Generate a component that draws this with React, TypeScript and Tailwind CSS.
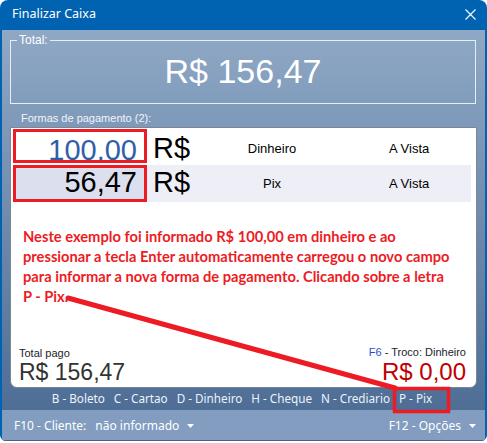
import React from "react";

// Payment rows shown in the "Formas de pagamento" list
interface PaymentRow {
    value: string;
    kind: string;
    term: string;
    active: boolean;
}

const rows: PaymentRow[] = [
    { value: "100,00", kind: "Dinheiro", term: "A Vista", active: false },
    { value: "56,47", kind: "Pix", term: "A Vista", active: true },
];

const shortcuts = ["B - Boleto", "C - Cartao", "D - Dinheiro", "H - Cheque", "N - Crediario", "P - Pix"];

const Caret = () => (
    <svg width="7" height="4" viewBox="0 0 7 4" className="inline-block ml-[8px] mb-[1px]">
        <path d="M0 0 H7 L3.5 4 Z" fill="#ffffff" />
    </svg>
);

const App = () => {
    return (
        <div className="relative w-[487px] h-[443px] bg-white overflow-hidden">
            {/* Window */}
            <div className="flex flex-col w-[487px] h-[441px] rounded-t-[8px] rounded-b-[6px] bg-[#0063b1] overflow-hidden">

                {/* TITLE BAR */}
                <div className="flex items-center justify-between h-[30px] pl-[12px] pr-[11px] font-['Noto_Sans',sans-serif] text-[12.5px] text-white shrink-0">
                    <span className="-mt-[1px]">Finalizar Caixa</span>
                    <svg width="11" height="11" viewBox="0 0 11 11" className="-mt-[2px]">
                        <path d="M0.5 0.5 L10.5 10.5 M10.5 0.5 L0.5 10.5" stroke="#ffffff" strokeWidth="1.1" />
                    </svg>
                </div>

                <div className="flex-1 mx-[2px] flex flex-col">
                    <div className="flex-1 flex flex-col bg-linear-to-b from-[#8fa8c5] to-[#4e6e96] font-['Liberation_Sans',Arial,sans-serif]">

                        {/* TOTAL */}
                        <fieldset className="mt-[3px] ml-[8px] w-[466px] h-[71px] border border-[#e6edf4] rounded-none px-0 pb-0">
                            <legend className="ml-[6px] px-[2px] text-[12px] leading-[14px] text-white">Total:</legend>
                            <div className="text-center text-white text-[34px] leading-[40px] mt-[4px]">R$ 156,47</div>
                        </fieldset>

                        <div className="mt-[8px] ml-[19px] text-[11px] leading-[13px] text-[#f2f5fa]">Formas de pagamento (2):</div>

                        {/* PAYMENTS PANEL */}
                        <div className="mt-[2px] ml-[8px] w-[467px] h-[261px] bg-white border border-[#7d8794] rounded-b-[7px] flex flex-col">
                            <div className="flex flex-col gap-[2px] pt-[1px] pl-[2px] pr-[5px]">
                                {rows.map((row, i) => (
                                    <div key={row.kind} className={`flex ${i === 0 ? "h-[34px]" : "h-[37px] bg-[#eeeef7]"}`}>
                                        <div className={`w-[134px] h-full border-[3px] border-[#ed1c24] overflow-hidden text-right pr-[7px] text-[29px] leading-[29px] ${row.active ? "bg-[#dcdfed] text-black pt-0" : "bg-white text-[#2f5ea8] pt-[4px]"}`}>
                                            {row.value}
                                        </div>
                                        <div className={`w-[60px] pl-[6px] text-[29px] leading-[29px] text-black ${i === 0 ? "pt-[5px]" : "pt-[3px]"}`}>R$</div>
                                        <div className={`w-[130px] flex items-center justify-center text-[13px] text-black ${i === 0 ? "pt-[5px]" : ""}`}>{row.kind}</div>
                                        <div className={`flex-1 flex items-center pl-[52px] text-[13px] text-black ${i === 0 ? "pt-[5px]" : ""}`}>{row.term}</div>
                                    </div>
                                ))}
                            </div>

                            <p className="mt-[24px] pl-[12px] font-['Lato',sans-serif] font-bold text-[14.7px] leading-[20px] text-[#ed1c24] whitespace-nowrap">
                                Neste exemplo foi informado R$ 100,00 em dinheiro e ao<br />
                                pressionar a tecla Enter automaticamente carregou o novo campo<br />
                                para informar a nova forma de pagamento. Clicando sobre a letra<br />
                                P - Pix.
                            </p>

                            {/* TOTALS */}
                            <div className="mt-auto flex justify-between items-end pl-[8px] pr-[10px] pb-[2px]">
                                <div>
                                    <div className="text-[11px] leading-[13px] text-[#1c1c2c]">Total pago</div>
                                    <div className="text-[23px] leading-[25px] text-[#333333]">R$ 156,47</div>
                                </div>
                                <div className="text-right">
                                    <div className="text-[11px] leading-[13px] text-[#1c1c2c]"><span className="text-[#1f4fd0]">F6</span> - Troco: Dinheiro</div>
                                    <div className="text-[24px] leading-[26px] text-[#c00000]">R$ 0,00</div>
                                </div>
                            </div>
                        </div>

                        {/* SHORTCUTS */}
                        <div className="h-[22px] flex items-center justify-center gap-[9px] pl-[3px] pr-[6px] font-['Noto_Sans',sans-serif] text-[11.7px] text-[#eef3fa]">
                            {shortcuts.map((s) => (
                                <span key={s} className="whitespace-nowrap">{s}</span>
                            ))}
                        </div>
                    </div>

                    {/* FOOTER */}
                    <div className="h-[31px] shrink-0 flex items-center justify-between pl-[12px] pr-[9px] pt-[2px] bg-[#829dbf] border-b border-[#4a6383] font-['Noto_Sans',sans-serif] text-[12px] text-white">
                        <div className="flex items-center">
                            <span>F10 - Cliente:</span>
                            <span className="ml-[9px]">não informado</span>
                            <Caret />
                        </div>
                        <div className="flex items-center">
                            <span>F12 - Opções</span>
                            <Caret />
                        </div>
                    </div>
                </div>
            </div>

            {/* Annotation: arrow and highlight box */}
            <svg className="absolute inset-0 pointer-events-none" width="487" height="443">
                <path d="M68 298 L395 388" stroke="#ed1c24" strokeWidth="5" strokeLinecap="round" />
                <rect x="394.5" y="388.5" width="54" height="23" fill="none" stroke="#ed1c24" strokeWidth="3.5" />
            </svg>
        </div>
    );
};

export default App;
